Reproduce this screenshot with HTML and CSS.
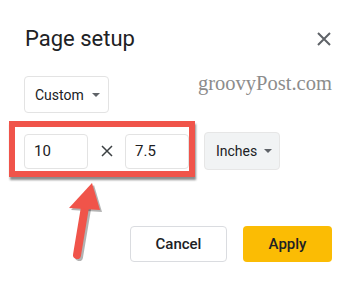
FILE: index.html
```html
<!DOCTYPE html>
<html lang="en">
<head>
    <meta charset="UTF-8">
    <meta name="viewport" content="width=device-width, initial-scale=1.0">
    <title>Page setup</title>
    <link rel="stylesheet" href="styles.css">
</head>
<body>
    <div class="dialog">
        <div class="header">
            <h1 class="title">Page setup</h1>
            <svg class="close" width="14" height="14" viewBox="0 0 14 14">
                <path d="M1 1L13 13M13 1L1 13" stroke="#5f6368" stroke-width="2"/>
            </svg>
        </div>

        <div class="row-preset">
            <div class="select">Custom <span class="caret"></span></div>
        </div>

        <div class="row-size">
            <div class="input">10</div>
            <div class="times">
                <svg width="12" height="12" viewBox="0 0 12 12">
                    <path d="M1 1L11 11M11 1L1 11" stroke="#3c4043" stroke-width="1.5"/>
                </svg>
            </div>
            <div class="input">7.5</div>
            <div class="select select-grey">Inches <span class="caret"></span></div>
        </div>

        <div class="footer">
            <button class="btn btn-cancel">Cancel</button>
            <button class="btn btn-apply">Apply</button>
        </div>
    </div>

    <!-- annotations drawn over the screenshot -->
    <div class="watermark">groovyPost.com</div>
    <div class="highlight"></div>
    <svg class="arrow" width="60" height="90" viewBox="0 0 60 90">
        <g transform="translate(2,2)" fill="rgba(0,0,0,0.3)" stroke="rgba(0,0,0,0.3)">
            <path d="M23 78L31 30" stroke-width="8" stroke-linecap="round" fill="none"/>
            <polygon points="38,6 15,31 46,33" stroke="none"/>
        </g>
        <path d="M23 78L31 30" stroke="#f0544a" stroke-width="8" stroke-linecap="round" fill="none"/>
        <polygon points="38,6 15,31 46,33" fill="#f0544a"/>
    </svg>
</body>
</html>
```

FILE: styles.css
```css
* {
    margin: 0;
    padding: 0;
    box-sizing: border-box;
}

body {
    font-family: Roboto, 'Liberation Sans', Arial, sans-serif;
    background: #ffffff;
    color: #202124;
    width: 358px;
    height: 286px;
    overflow: hidden;
    position: relative;
}

.dialog {
    padding: 25px 26px 0 24px;
}

.header {
    display: flex;
    justify-content: space-between;
    align-items: center;
    height: 28px;
}

.title {
    font-size: 22px;
    font-weight: 400;
    line-height: 28px;
    margin-left: 1px;
}

.close {
    margin-right: 1px;
}

.row-preset {
    display: flex;
    margin-top: 23px;
}

.select {
    display: flex;
    align-items: center;
    height: 37px;
    padding: 0 8px 0 10px;
    border: 1px solid #e3e3e3;
    border-radius: 4px;
    background: #fff;
    font-size: 14px;
    gap: 8px;
}

.caret {
    width: 0;
    height: 0;
    border-left: 4px solid transparent;
    border-right: 4px solid transparent;
    border-top: 4px solid #5f6368;
}

.row-size {
    display: flex;
    align-items: center;
    margin-top: 19px;
    height: 38px;
}

.input {
    width: 64px;
    height: 35px;
    border: 1px solid #e3e3e3;
    border-radius: 4px;
    padding-left: 9px;
    font-size: 15px;
    line-height: 33px;
}

.times {
    width: 37px;
    display: flex;
    justify-content: center;
}

.select-grey {
    height: 38px;
    margin-left: 15px;
    background: #f1f3f4;
    border-color: #e6e6e6;
    padding: 0 7px 0 11px;
    gap: 7px;
}

.footer {
    display: flex;
    justify-content: flex-end;
    gap: 16px;
    margin-top: 56px;
}

.btn {
    height: 36px;
    border-radius: 4px;
    font-family: inherit;
    font-size: 15px;
    font-weight: 500;
    color: #202124;
    cursor: pointer;
}

.btn-cancel {
    width: 97px;
    background: #fff;
    border: 1px solid #dadce0;
}

.btn-apply {
    width: 89px;
    background: #fbbc04;
    border: none;
}

.watermark {
    position: absolute;
    left: 198px;
    top: 71px;
    font-family: 'Liberation Serif', 'Times New Roman', serif;
    font-size: 20.5px;
    line-height: 24px;
    color: #8c8c8c;
}

.highlight {
    position: absolute;
    left: 9px;
    top: 121px;
    width: 186px;
    height: 56px;
    border: 6px solid #f0544a;
    box-shadow: 1px 3px 2px rgba(0, 0, 0, 0.45);
}

.arrow {
    position: absolute;
    left: 54px;
    top: 177px;
}
```
